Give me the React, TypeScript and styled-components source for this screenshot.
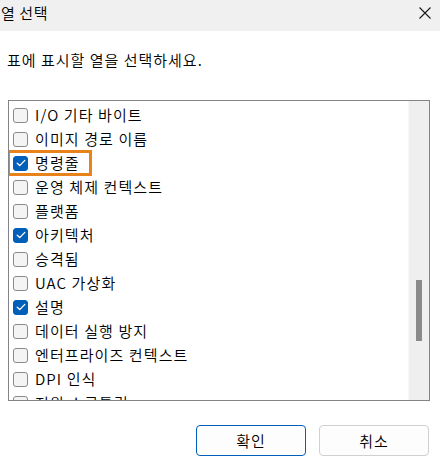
import React from "react";
import styled, { createGlobalStyle } from "styled-components";

const Global = createGlobalStyle`
  html, body { margin: 0; padding: 0; background: #ffffff; }
  body { font-family: "Noto Sans CJK KR", "Noto Sans", sans-serif; color: #1a1a1a; }
`;

const Dialog = styled.div`
  width: 440px;
  height: 465px;
  display: flex;
  flex-direction: column;
  background: #ffffff;
  overflow: hidden;
`;

const TitleBar = styled.div`
  height: 31px;
  background: #f0f0f0;
  display: flex;
  align-items: center;
  justify-content: space-between;
  padding: 0 8px 0 1px;
  box-sizing: border-box;
`;

const Title = styled.span`
  font-size: 15px;
  line-height: 20px;
  letter-spacing: 0.6px;
  font-weight: 350;
  color: #000;
  margin-top: -5px;
`;

const CloseButton = styled.span`
  width: 14px;
  height: 14px;
  display: flex;
  margin-top: -6px;
`;

const Instruction = styled.div`
  font-size: 15px;
  line-height: 20px;
  letter-spacing: 1px;
  font-weight: 350;
  padding: 19px 0 0 7px;
  height: 69px;
  box-sizing: border-box;
  color: #000;
`;

const ListBox = styled.div`
  margin: 0 10px 0 8px;
  height: 301px;
  border: 1px solid #848484;
  box-sizing: border-box;
  display: flex;
`;

const Items = styled.div`
  flex: 1;
  overflow: hidden;
  padding-top: 2px;
`;

const Row = styled.div`
  position: relative;
  height: 24px;
  display: flex;
  align-items: center;
  padding-left: 4px;
  gap: 7px;
`;

const Box = styled.span<{ $checked: boolean }>`
  width: 15px;
  height: 15px;
  box-sizing: border-box;
  border-radius: 3px;
  border: 1px solid ${(p) => (p.$checked ? "#005fb8" : "#8a8a8a")};
  background: ${(p) => (p.$checked ? "#005fb8" : "#f4f4f4")};
  display: flex;
  align-items: center;
  justify-content: center;
  flex: none;
`;

const Label = styled.span`
  font-size: 15px;
  line-height: 20px;
  letter-spacing: 1.1px;
  font-weight: 350;
  color: #000;
  white-space: nowrap;
`;

const Highlight = styled.span`
  position: absolute;
  left: -2px;
  top: -1px;
  width: 85px;
  height: 26px;
  border: 3px solid #e8831c;
  box-sizing: border-box;
  pointer-events: none;
`;

const Track = styled.div`
  width: 21px;
  background: #efefef;
  border-left: 1px solid #f7f7f7;
  padding-top: 179px;
  box-sizing: border-box;
`;

const Thumb = styled.div`
  width: 6px;
  height: 61px;
  margin-left: 7px;
  background: #8a8a8a;
`;

const Footer = styled.div`
  display: flex;
  justify-content: flex-end;
  gap: 13px;
  padding: 24px 11px 0 0;
`;

const Button = styled.button<{ $primary?: boolean }>`
  width: 110px;
  height: 31px;
  border-radius: 4px;
  border: 1px solid ${(p) => (p.$primary ? "#005fb8" : "#d0d0d0")};
  box-shadow: ${(p) => (p.$primary ? "inset 0 0 0 1px #ffffff" : "none")};
  background: #fdfdfd;
  font-family: "Noto Sans CJK KR", "Noto Sans", sans-serif;
  font-size: 15px;
  font-weight: 350;
  letter-spacing: 1px;
  color: #000;
  padding: 0;
  line-height: 20px;
`;

const Check = () => (
  <svg width="10" height="8" viewBox="0 0 10 8">
    <path d="M1.2 4.2 L3.8 6.6 L8.8 1.4" fill="none" stroke="#ffffff" strokeWidth="1.3" strokeLinecap="round" strokeLinejoin="round" />
  </svg>
);

const items: { label: string; checked: boolean; highlight?: boolean }[] = [
  { label: "I/O 기타 바이트", checked: false },
  { label: "이미지 경로 이름", checked: false },
  { label: "명령줄", checked: true, highlight: true },
  { label: "운영 체제 컨텍스트", checked: false },
  { label: "플랫폼", checked: false },
  { label: "아키텍처", checked: true },
  { label: "승격됨", checked: false },
  { label: "UAC 가상화", checked: false },
  { label: "설명", checked: true },
  { label: "데이터 실행 방지", checked: false },
  { label: "엔터프라이즈 컨텍스트", checked: false },
  { label: "DPI 인식", checked: false },
  { label: "전원 스로틀링", checked: false },
];

export default function App() {
  return (
    <Dialog>
      <Global />
      <TitleBar>
        <Title>열 선택</Title>
        <CloseButton>
          <svg width="14" height="14" viewBox="0 0 14 14">
            <path d="M1.5 1.5 L12.5 12.5 M12.5 1.5 L1.5 12.5" stroke="#1a1a1a" strokeWidth="1.1" fill="none" />
          </svg>
        </CloseButton>
      </TitleBar>
      <Instruction>표에 표시할 열을 선택하세요.</Instruction>
      <ListBox>
        <Items>
          {items.map((it) => (
            <Row key={it.label}>
              <Box $checked={it.checked}>{it.checked && <Check />}</Box>
              <Label>{it.label}</Label>
              {it.highlight && <Highlight />}
            </Row>
          ))}
        </Items>
        <Track>
          <Thumb />
        </Track>
      </ListBox>
      <Footer>
        <Button $primary>확인</Button>
        <Button>취소</Button>
      </Footer>
    </Dialog>
  );
}
